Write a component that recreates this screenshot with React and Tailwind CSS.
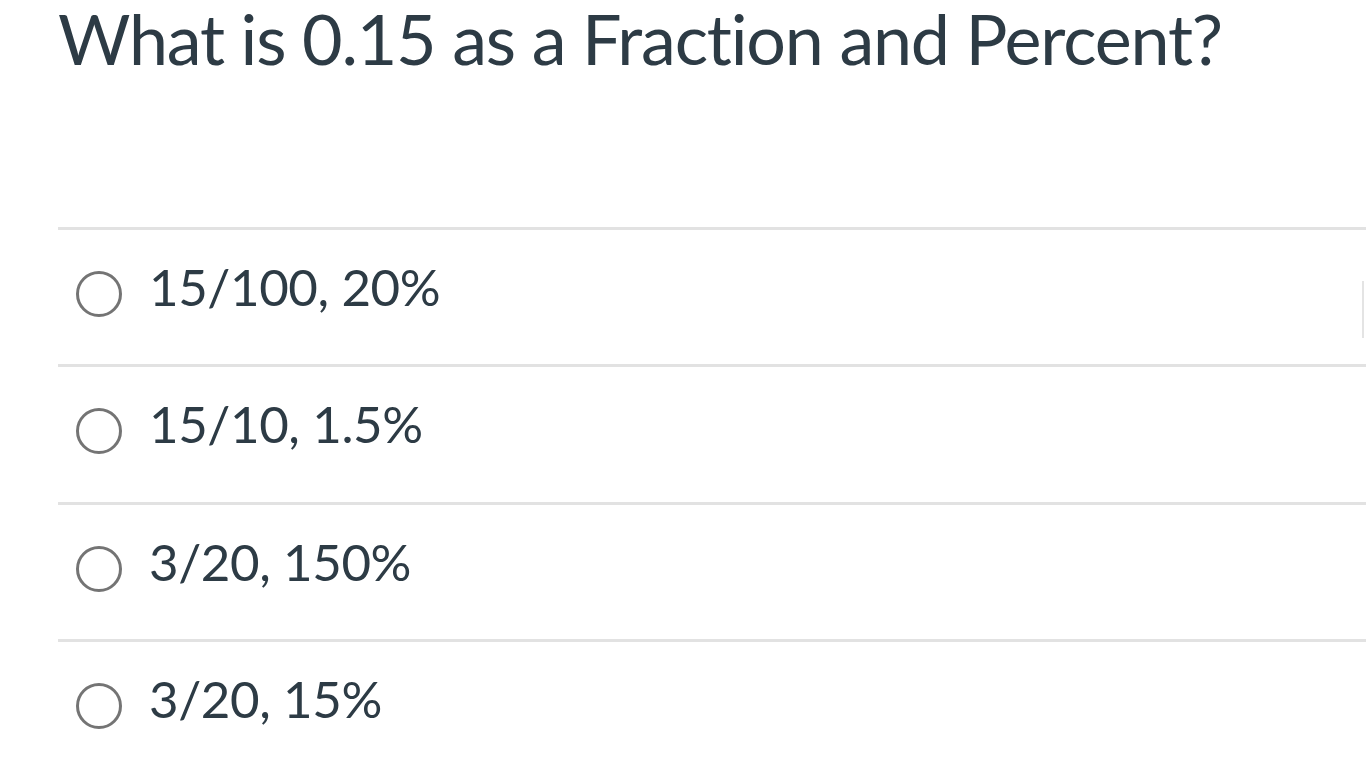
import React from "react";

const options = ["15/100, 20%", "15/10, 1.5%", "3/20, 150%", "3/20, 15%"];

const Radio = () => (
  <span className="mt-[41px] ml-[18px] block h-[46px] w-[46px] shrink-0 rounded-full border-[3px] border-[#747474] bg-white" />
);

export default function App() {
  return (
    <div
      className="relative h-[768px] w-[1366px] overflow-hidden bg-white pl-[58px] text-[#2d3b45]"
      style={{ fontFamily: "Lato, 'Open Sans', sans-serif" }}
    >
      <h1 className="mt-[3px] text-[70px] leading-[70px] font-normal tracking-[-1.2px] whitespace-nowrap">
        What is 0.15 as a Fraction and Percent?
      </h1>

      <div className="mt-[154px]">
        {options.map((opt) => (
          <div
            key={opt}
            className="flex h-[137.3px] items-start border-t-[3px] border-[#e2e2e2]"
          >
            <Radio />
            <span className="mt-[31px] ml-[27px] text-[51px] leading-[51px] tracking-[-0.4px]">
              {opt}
            </span>
          </div>
        ))}
      </div>

      {/* faint edge of a panel at the right */}
      <div className="absolute top-[281px] right-[2px] h-[57px] w-[2px] bg-[#e4e4e4]" />
    </div>
  );
}
